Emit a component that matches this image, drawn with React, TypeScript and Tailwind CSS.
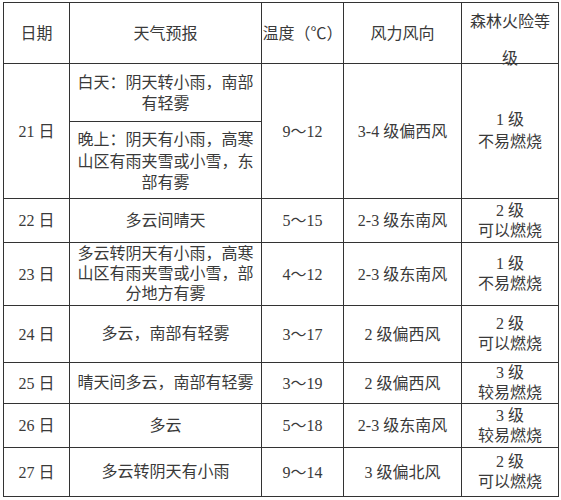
import React from 'react';

interface DayRow {
  date: string;
  forecast: string;
  temp: string;
  wind: string;
  level: string;
  burn: string;
  height: string;
}

const rows: DayRow[] = [
  { date: '22 日', forecast: '多云间晴天', temp: '5～15', wind: '2-3 级东南风', level: '2 级', burn: '可以燃烧', height: 'h-[44px]' },
  { date: '23 日', forecast: '多云转阴天有小雨，高寒山区有雨夹雪或小雪，部分地方有雾', temp: '4～12', wind: '2-3 级东南风', level: '1 级', burn: '不易燃烧', height: 'h-[63px]' },
  { date: '24 日', forecast: '多云，南部有轻雾', temp: '3～17', wind: '2 级偏西风', level: '2 级', burn: '可以燃烧', height: 'h-[57px]' },
  { date: '25 日', forecast: '晴天间多云，南部有轻雾', temp: '3～19', wind: '2 级偏西风', level: '3 级', burn: '较易燃烧', height: 'h-[41px]' },
  { date: '26 日', forecast: '多云', temp: '5～18', wind: '2-3 级东南风', level: '3 级', burn: '较易燃烧', height: 'h-[44px]' },
  { date: '27 日', forecast: '多云转阴天有小雨', temp: '9～14', wind: '3 级偏北风', level: '2 级', burn: '可以燃烧', height: 'h-[49px]' },
];

const cell = 'border border-[#333] text-center align-middle p-0';

const App: React.FC = () => {
  return (
    <div
      className="w-[561px] h-[500px] bg-white text-[#3a3a3a] text-[16px] leading-[21px] pl-[3px] pt-[2px]"
      style={{ fontFamily: '"Liberation Serif", "Noto Sans CJK SC", serif' }}
    >
      <table className="table-fixed border-collapse w-[555px]">
        <colgroup>
          <col className="w-[66px]" />
          <col className="w-[192px]" />
          <col className="w-[82px]" />
          <col className="w-[118px]" />
          <col className="w-[97px]" />
        </colgroup>
        <tbody>
          <tr className="h-[61px]">
            <td className={cell}>日期</td>
            <td className={cell}>天气预报</td>
            <td className={cell}>温度（℃）</td>
            <td className={cell}>风力风向</td>
            <td className={`${cell} !align-top px-[6px]`}>
              <div className="h-[59px] leading-[37px]">森林火险等级</div>
            </td>
          </tr>
          <tr className="h-[58px]">
            <td className={cell} rowSpan={2}>21 日</td>
            <td className={`${cell} px-[7px]`}>白天：阴天转小雨，南部有轻雾</td>
            <td className={cell} rowSpan={2}>9～12</td>
            <td className={cell} rowSpan={2}>3-4 级偏西风</td>
            <td className={cell} rowSpan={2}>
              <div className="leading-[22px]">1 级</div>
              <div className="leading-[22px]">不易燃烧</div>
            </td>
          </tr>
          <tr className="h-[77px]">
            <td className={`${cell} px-[7px] pt-[3px] leading-[21.5px]`}>
              晚上：阴天有小雨，高寒山区有雨夹雪或小雪，东部有雾
            </td>
          </tr>
          {rows.map((r) => (
            <tr key={r.date} className={r.height}>
              <td className={cell}>{r.date}</td>
              <td className={`${cell} px-[7px] leading-[20px]`}>{r.forecast}</td>
              <td className={cell}>{r.temp}</td>
              <td className={cell}>{r.wind}</td>
              <td className={`${cell} leading-[20px]`}>
                <div>{r.level}</div>
                <div>{r.burn}</div>
              </td>
            </tr>
          ))}
        </tbody>
      </table>
    </div>
  );
};

export default App;
